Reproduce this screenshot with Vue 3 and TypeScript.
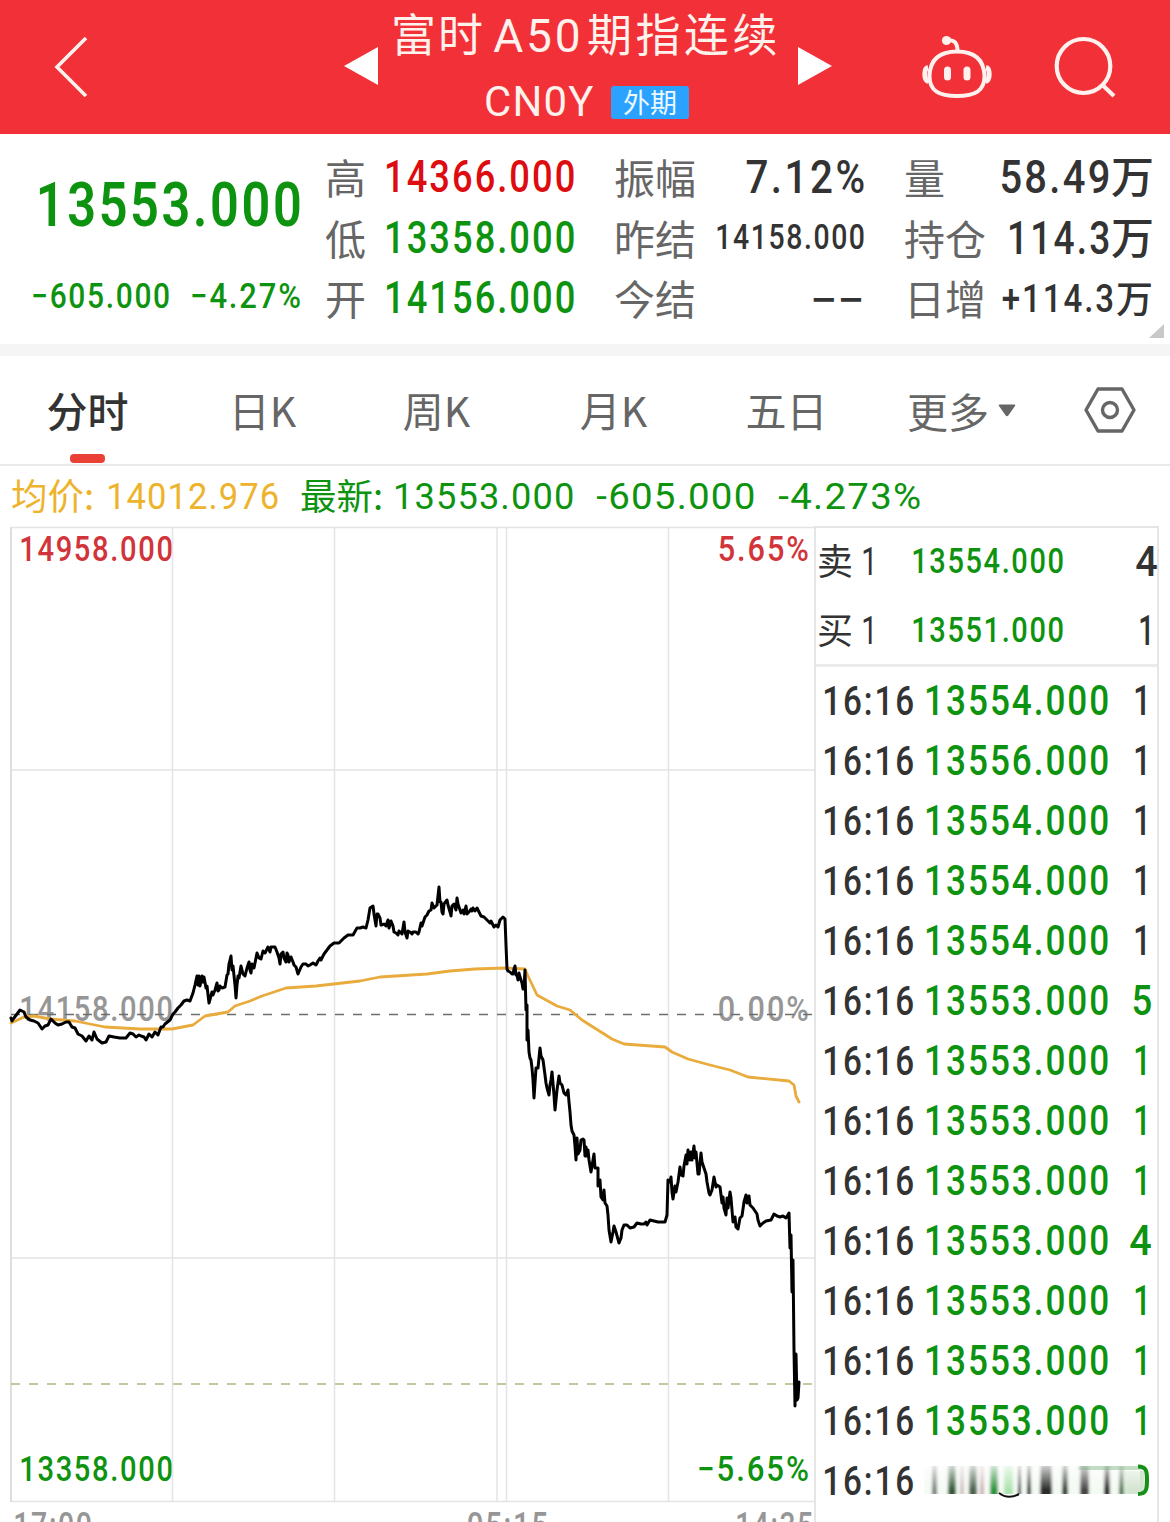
<script setup lang="ts">
import { h, type FunctionalComponent } from 'vue'

// Advance width and side bearings (in em) of the numeric glyphs
const ADV: Record<string, number> = { '.': 0.275, ':': 0.26, '%': 0.735, '+': 0.56, '-': 0.3, '−': 0.56, C: 0.651, N: 0.713, Y: 0.6, A: 0.652 }
const LEFT: Record<string, number> = { '1': 0.025, '4': 0.02, '+': 0.035, '-': 0.018, '−': 0.06, A: 0.014, C: 0.045, '%': 0.05 }
const RIGHT: Record<string, number> = { '1': 0.12, '4': 0.018, '%': 0.03, Y: 0.008, '−': 0.05 }

interface NumProps { t: string; w: number; h: number; f?: number }
// Numeric text w pixels from first to last stroke, digits h pixels tall;
// f is the share of the width taken by the glyphs, the rest goes to letter spacing
const Num: FunctionalComponent<NumProps> = (p) => {
  const size = p.h / 0.711
  const chars = [...p.t]
  const adv = chars.reduce((s, c) => s + (ADV[c] ?? 0.566), 0)
  const l = LEFT[chars[0]] ?? 0.04
  const r = RIGHT[chars[chars.length - 1]] ?? 0.035
  const ink = (adv - l - r) * size
  const k = (p.w / ink) * (chars.length > 1 ? (p.f ?? 0.91) : 1)
  return h('svg', { class: 'num', width: p.w, height: p.h }, [
    h('text', {
      x: -l * size, y: p.h, 'font-size': size, transform: `scale(${k} 1)`,
      textLength: adv * size + p.w / k - ink, lengthAdjust: chars.length > 1 ? 'spacing' : 'spacingAndGlyphs',
    }, p.t),
  ])
}
Num.props = ['t', 'w', 'h', 'f']

const ticks = [
  ['13554.000', '1'], ['13556.000', '1'], ['13554.000', '1'], ['13554.000', '1'], ['13554.000', '1'],
  ['13553.000', '5'], ['13553.000', '1'], ['13553.000', '1'], ['13553.000', '1'], ['13553.000', '4'],
  ['13553.000', '1'], ['13553.000', '1'], ['13553.000', '1'],
].map(([price, qty], i) => ({ price, qty, up: i < 5 }))

const price = '11,1018 12,1021 14,1018 17,1014 20,1010 24,1012 26,1017 30,1020 34,1021 38,1023 42,1029 45,1026 48,1025 51,1019 55,1023 58,1025 62,1024 66,1022 69,1022 72,1027 75,1028 78,1034 82,1036 86,1041 89,1036 92,1040 94,1032 97,1039 102,1043 106,1042 109,1036 114,1037 120,1038 126,1038 130,1033 133,1034 136,1037 139,1035 141,1036 144,1037 146,1040 149,1034 152,1037 155,1032 158,1035 161,1027 163,1027 165,1024 170,1020 173,1014 175,1012 178,1008 181,1005 184,1001 187,1000 190,1001 193,993 195,985 197,976 198,985 199,976 200,986 202,976 203,982 204,977 206,988 207,986 209,1003 212,992 213,995 215,990 217,983 218,991 219,990 220,986 222,988 225,987 227,975 228,974 229,964 231,956 232,970 233,966 235,985 236,998 237,985 238,976 239,978 240,972 241,966 243,974 245,976 247,968 249,962 250,970 251,973 252,964 254,968 257,953 259,958 261,959 263,951 265,953 268,947 270,952 271,947 275,947 277,952 279,958 280,964 281,954 283,952 284,958 286,962 287,953 288,955 289,962 291,957 293,962 294,965 296,967 298,974 301,967 303,964 306,964 308,966 310,965 313,963 316,965 318,961 320,958 321,960 324,954 330,946 334,943 339,943 344,938 348,935 353,935 357,928 360,928 363,927 366,928 368,920 370,908 373,906 374,914 376,926 377,914 378,914 380,918 381,925 382,925 384,924 386,926 388,920 389,928 391,921 393,926 394,932 396,933 398,935 399,931 402,934 404,922 405,932 407,938 408,931 410,932 412,934 413,932 416,932 418,934 419,932 421,923 422,926 425,917 427,915 429,911 431,910 432,903 434,908 437,905 439,887 440,902 441,902 442,912 443,914 444,904 447,900 448,905 450,912 451,916 452,906 454,904 456,910 457,898 458,904 461,913 463,910 464,914 466,906 467,914 469,912 471,909 472,911 473,908 475,911 477,908 479,912 481,916 484,917 486,919 488,921 490,923 491,921 494,927 496,925 498,927 500,920 503,917 505,919 506,945 507,969 508,971 510,972 512,974 513,974 514,969 515,966 516,975 517,975 518,980 519,973 520,977 522,983 523,989 524,989 525,970 526,1010 527,1005 527,1040 528,1030 529,1052 530,1058 531,1060 532,1068 533,1080 534,1098 536,1068 538,1068 539,1058 540,1048 541,1056 543,1060 545,1075 546,1083 547,1088 549,1095 550,1085 551,1080 552,1072 554,1095 555,1110 557,1090 559,1076 560,1083 562,1085 564,1093 566,1095 568,1090 569,1102 570,1112 571,1125 572,1131 574,1135 575,1146 576,1160 577,1138 578,1154 580,1150 581,1140 583,1139 584,1140 585,1156 586,1147 587,1156 588,1150 589,1160 591,1172 593,1160 594,1154 595,1168 598,1168 598,1186 600,1180 601,1197 603,1200 604,1190 605,1203 607,1206 608,1215 609,1230 611,1242 613,1232 614,1226 616,1232 619,1243 621,1238 622,1230 624,1225 627,1225 630,1228 634,1227 637,1223 641,1224 644,1224 646,1222 647,1225 650,1220 654,1221 658,1222 665,1222 667,1215 668,1180 670,1182 671,1177 672,1192 673,1199 675,1186 676,1192 678,1182 680,1167 681,1175 683,1176 684,1166 686,1155 687,1164 688,1150 690,1160 691,1152 692,1160 694,1146 695,1158 696,1152 698,1174 699,1174 701,1153 702,1162 704,1168 706,1174 707,1182 709,1193 710,1195 712,1190 714,1177 716,1187 717,1185 720,1187 722,1203 723,1197 724,1208 726,1215 727,1198 728,1208 730,1192 731,1198 733,1222 735,1217 736,1227 738,1229 740,1218 742,1216 744,1202 746,1195 747,1203 749,1196 750,1205 753,1208 755,1211 757,1214 758,1220 760,1226 763,1223 766,1221 771,1220 774,1214 777,1216 780,1217 783,1216 786,1218 789,1213 790,1248 791,1235 792,1292 793,1260 794,1350 795,1406 796,1354 797,1400 798,1398 799,1382'
const average = '11,1023 24,1017 34,1016 50,1019 75,1021 105,1027 140,1029 172,1029 193,1025 205,1016 228,1012 235,1006 250,1001 262,996 286,988 316,986 360,981 380,977 427,974 450,971 475,969 505,968 525,969 528,976 537,995 557,1006 570,1010 582,1020 612,1039 624,1044 665,1047 672,1052 688,1059 710,1065 730,1070 748,1077 789,1081 794,1085 796,1096 799,1102'

// Streaks over the newest trade: x, width, colour, strength
const streaks: [number, number, string, number][] = [
  [8, 5, '#555', 0.75], [24, 8, '#1d4a25', 0.9], [36, 4, '#b99aa0', 0.6], [45, 8, '#2f4a33', 0.85], [56, 4, '#b5808a', 0.6],
  [66, 8, '#168a2b', 0.9], [80, 9, '#8fdc90', 0.7], [94, 3, '#222', 0.95], [103, 4, '#222', 0.95], [116, 12, '#222', 0.95],
  [138, 6, '#263328', 0.9], [156, 9, '#333', 0.9], [180, 6, '#222', 0.95], [195, 5, '#2f5a35', 0.8],
]
</script>

<template>
  <main class="screen">
    <header class="top">
      <svg class="back" width="36" height="62"><path d="M33 3 4 32 33 61" fill="none" stroke="#fff1ec" stroke-width="3.600" /></svg>
      <svg class="prev" width="34" height="38"><path d="M0 19 34 0V38z" fill="#fff" /></svg>
      <div class="title">
        <div class="name">
          <span class="cjk n1">富时</span><Num t="A50" :w="85" :h="33" :f="0.94" /><span class="cjk n2">期指连续</span>
        </div>
        <div class="code"><Num t="CN0Y" :w="107" :h="30" :f="0.97" /><span class="badge cjk">外期</span></div>
      </div>
      <svg class="next" width="34" height="38"><path d="M34 19 0 0V38z" fill="#fff" /></svg>
      <svg class="robot" width="72" height="66" fill="none" stroke="#fff1ee" stroke-width="4">
        <path d="M36 17.500C54 17.500 63 26 63.500 42C63.500 57 54 62 36 62S8.500 57 8.500 42C9 26 18 17.500 36 17.500z" />
        <path d="M7 33.500C4.500 34 3.800 36 3.800 40S4.500 46.500 7.500 47.500M65 33.500C67.500 34 68.200 36 68.200 40S67.500 46.500 64.500 47.500" stroke-width="5" />
        <path d="M26 6.500C33 5 36.500 9 36.500 17" />
        <circle cx="25.500" cy="6.500" r="4.600" fill="#fff1ee" stroke="none" />
        <path d="M26.500 36v7M46 36v7" stroke-width="7" stroke-linecap="round" />
      </svg>
      <svg class="search" width="62" height="62" fill="none" stroke="#fff1ee" stroke-width="4.200"><ellipse cx="29.500" cy="30" rx="26.800" ry="27" /><path d="M49 49.500 60 60" /></svg>
    </header>

    <section class="quote">
      <div class="last green">
        <Num class="bold" t="13553.000" :w="263" :h="44" />
        <div class="change"><Num t="−605.000" :w="136" :h="25" /><Num t="−4.27%" :w="108" :h="25" /></div>
      </div>
      <div class="stats c1">
        <div><span class="cjk">高</span><Num class="red" t="14366.000" :w="189" :h="32" /></div>
        <div><span class="cjk">低</span><Num class="green" t="13358.000" :w="189" :h="32" /></div>
        <div><span class="cjk">开</span><Num class="green" t="14156.000" :w="189" :h="32" /></div>
      </div>
      <div class="stats c2">
        <div><span class="cjk">振幅</span><Num t="7.12%" :w="117" :h="33" /></div>
        <div><span class="cjk">昨结</span><Num t="14158.000" :w="148" :h="25" /></div>
        <div><span class="cjk">今结</span><Num class="dash" t="−−" :w="49" :h="29" :f="1" /></div>
      </div>
      <div class="stats c3">
        <div><span class="cjk">量</span><b><Num t="58.49" :w="108" :h="33" /><i class="cjk">万</i></b></div>
        <div><span class="cjk">持仓</span><b><Num t="114.3" :w="101" :h="33" /><i class="cjk">万</i></b></div>
        <div><span class="cjk">日增</span><b><Num t="+114.3" :w="110" :h="28" /><i class="cjk small">万</i></b></div>
      </div>
      <svg class="corner" width="15" height="14"><path d="M15 0V14H0z" fill="#c8c8c8" /></svg>
    </section>

    <nav class="tabs cjk">
      <span class="tab active">分时</span>
      <span class="tab">日K</span>
      <span class="tab">周K</span>
      <span class="tab">月K</span>
      <span class="tab">五日</span>
      <span class="tab more">更多<svg width="18" height="13"><path d="M1.500 .5H16.500Q18 .5 17 2L10.300 11.500Q9 13 7.700 11.500L1 2Q0 .5 1.500 .5z" fill="#666" /></svg></span>
      <svg class="gear" width="52" height="46" fill="none" stroke="#666" stroke-width="3.400"><path d="M14 2H38L50 23 38 44H14L2 23z" stroke-linejoin="round" /><circle cx="26" cy="23" r="7.500" /></svg>
    </nav>

    <div class="info">
      <span class="cjk gold">均价:</span><Num class="gold" t="14012.976" :w="171" :h="26" :f="0.96" />
      <span class="cjk green newest">最新:</span><Num class="green" t="13553.000" :w="179" :h="26" :f="0.96" />
      <Num class="green d1" t="-605.000" :w="157" :h="26" :f="0.96" /><Num class="green d2" t="-4.273%" :w="141" :h="26" :f="0.96" />
    </div>

    <section class="board">
      <div class="chart">
        <div class="labels">
          <div class="red2"><Num t="14958.000" :w="152" :h="25" /><Num t="5.65%" :w="89" :h="25" /></div>
          <div class="grey"><Num t="14158.000" :w="152" :h="25" /><Num t="0.00%" :w="89" :h="25" /></div>
          <div class="green"><Num t="13358.000" :w="152" :h="25" /><Num t="−5.65%" :w="109" :h="25" /></div>
        </div>
        <svg class="plot" width="816" height="996" viewBox="0 526 816 996" fill="none">
          <path d="M11 527.500H815M11 770H815M11 1258H815M11 1501.500H815M172.500 527V1501M334.500 527V1501M497 527V1501M506.500 527V1501M668.500 527V1501" stroke="#e4e4e4" stroke-width="1.500" />
          <path d="M11 527V1502" stroke="#dedede" stroke-width="2" />
          <path d="M11 1014.500H812" stroke="#6e6e6e" stroke-width="1.300" stroke-dasharray="9 9" />
          <path d="M11 1384H812" stroke="#a9bb7c" stroke-width="1.400" stroke-dasharray="9 9" />
          <polyline :points="average" stroke="#e8ab3c" stroke-width="2.800" stroke-linejoin="round" stroke-linecap="round" />
          <polyline :points="price" stroke="#000" stroke-width="3" stroke-linejoin="round" stroke-linecap="round" />
        </svg>
        <div class="axis grey"><Num t="17:00" :w="77" :h="26" /><Num t="05:15" :w="79" :h="26" /><Num t="14:35" :w="76" :h="26" /></div>
      </div>

      <aside class="side">
        <div class="book">
          <div><span class="cjk">卖</span><Num class="lvl" t="1" :w="12" :h="28" /><Num class="green mid" t="13554.000" :w="151" :h="25" /><Num class="qty wide" t="4" :w="21" :h="30" /></div>
          <div><span class="cjk">买</span><Num class="lvl" t="1" :w="12" :h="28" /><Num class="green mid" t="13551.000" :w="151" :h="25" /><Num class="qty" t="1" :w="12" :h="30" /></div>
        </div>
        <div class="trades">
          <div v-for="(k, i) in ticks" :key="i" class="trade">
            <Num t="16:16" :w="90" :h="29" />
            <Num class="green px" :t="k.price" :w="183" :h="30" />
            <Num class="qty" :class="{ green: !k.up, five: k.qty !== '1' }" :t="k.qty" :w="k.qty === '1' ? 13 : k.qty === '4' ? 21 : 18" :h="30" />
          </div>
          <div class="trade">
            <Num t="16:16" :w="90" :h="29" />
            <svg class="smear" width="230" height="40">
              <defs>
                <linearGradient id="fade" x1="0" y1="0" x2="0" y2="1"><stop offset="0" stop-color="#fff" stop-opacity=".9" /><stop offset="1" stop-color="#fff" stop-opacity="0" /></linearGradient>
                <filter id="soft" x="-5%" y="-5%" width="110%" height="110%"><feGaussianBlur stdDeviation="1.800 .4" /></filter>
              </defs>
              <g filter="url(#soft)">
                <rect x="0" y="4" width="222" height="28" fill="#edf7ed" opacity=".6" />
                <rect x="201" y="9" width="20" height="23" fill="#d3e5d0" />
                <rect v-for="s in streaks" :key="s[0]" :x="s[0]" y="4" :width="s[1]" height="28" :fill="s[2]" :opacity="s[3]" />
              </g>
              <rect x="0" y="0" width="216" height="28" fill="url(#fade)" />
              <rect x="155" y="4" width="62" height="4" fill="#6fae74" opacity=".4" filter="url(#soft)" />
              <path d="M75 31Q84 38 95 32" fill="none" stroke="#111" stroke-width="2" />
              <path d="M214 4.500C223 4.500 223 10 223 18S223 32 214 32" fill="none" stroke="#148f18" stroke-width="4" />
            </svg>
          </div>
        </div>
      </aside>
    </section>
  </main>
</template>

<style>
html, body { margin: 0; background: #fff; overflow: hidden; }
</style>

<style scoped>
.screen { width: 1170px; height: 1522px; overflow: hidden; background: #fff; color: #333; font-family: Roboto, "Noto Sans CJK SC", sans-serif; }
.screen :deep(.num) { display: block; flex: none; overflow: visible; fill: currentColor; font-family: Roboto, sans-serif; font-weight: 500; }
.screen :deep(.bold) { font-weight: 600; }
svg { display: block; flex: none; }
.cjk { font-family: "Noto Sans CJK SC", sans-serif; white-space: nowrap; }
.green { color: #0d930f; }
.red { color: #dc0c10; }
.red2 { color: #d1343a; }
.grey { color: #969696; }
.gold { color: #edb32c; }

.top { display: flex; height: 134px; background: #f13037; color: #fff1ec; }
.top :deep(.num) { font-weight: 400; }
.back { margin: 35px 0 0 53px; }
.prev { margin: 47px 0 0 255px; }
.title { width: 400px; margin-left: 12px; }
.name { display: flex; height: 76px; }
.name :deep(.num) { margin-top: 19px; }
.n1, .n2 { font-size: 45px; line-height: 60px; margin-top: 3px; font-weight: 400; letter-spacing: 2px; }
.n1 { width: 103px; margin-left: 1px; }
.n2 { margin-left: 8px; letter-spacing: 3.500px; }
.code { display: flex; margin: 10px 0 0 96px; }
.badge { width: 78px; height: 33px; margin-left: 18px; border-radius: 3px; background: #2ba2ff; color: #ecfaff; font-size: 27px; line-height: 31px; text-align: center; font-weight: 400; }
.next { margin: 47px 0 0 8px; }
.robot { margin: 34px 0 0 89px; }
.search { margin: 36px 0 0 61px; }

.quote { position: relative; display: flex; height: 210px; border-bottom: 12px solid #f5f5f5; }
.last { width: 325px; }
.last > :deep(.num) { margin: 48px 0 0 37px; }
.change { display: flex; gap: 23px; margin: 57px 0 0 33px; }
.stats { display: flex; flex-direction: column; padding-top: 14px; }
.stats > div { display: flex; align-items: center; justify-content: space-between; height: 60.500px; }
.stats span { margin-top: -4px; font-size: 41px; line-height: 56px; color: #666; font-weight: 400; }
.c1 { width: 249px; }
.c2 { width: 250px; margin-left: 40px; }
.c3 { width: 249px; margin-left: 40px; }
.c1 :deep(.num), .c2 :deep(.num) { margin-top: -4px; }
.c2 :deep(.dash) { margin: 0 2px 0 0; }
.c3 b { display: flex; align-items: center; }
.c3 :deep(.num) { margin-top: -3px; }
.c3 i { margin: -8px -1px 0 2px; font-size: 43px; line-height: 56px; font-style: normal; font-weight: 500; }
.c3 i.small { margin: -4px 0 0 3px; font-size: 37px; }
.corner { position: absolute; right: 6px; bottom: 6px; }

.tabs { display: flex; height: 108px; border-bottom: 2px solid #e9e9e9; font-size: 41px; line-height: 106px; color: #666; font-weight: 400; }
.tab { width: 175px; text-align: center; }
.tab.active { position: relative; font-weight: 500; color: #333; }
.tab.active::after { content: ""; position: absolute; left: 70px; bottom: 1px; width: 35px; height: 9px; border-radius: 4px; background: #ea4036; }
.tab:nth-child(2) { width: 175px; }
.tab:nth-child(3) { width: 173px; }
.tab:nth-child(4) { width: 181px; }
.tab:nth-child(5) { width: 165px; }
.tab.more { display: flex; align-items: center; width: 110px; margin-left: 38px; }
.tab.more svg { margin-left: 9px; }
.gear { margin: 31px 0 0 67px; }

.info { display: flex; height: 60px; padding-left: 11px; }
.info :deep(.num) { margin-top: 17px; font-weight: 400; }
.info span { width: 96px; font-size: 36.500px; line-height: 57px; font-weight: 400; }
.info .newest { width: 94px; margin-left: 22px; }
.info :deep(.d1) { margin-left: 24px; }
.info :deep(.d2) { margin-left: 25px; }

.board { display: flex; height: 996px; }
.chart { position: relative; width: 814px; }
.plot { position: absolute; left: 0; top: 0; }
.labels { display: flex; flex-direction: column; justify-content: space-between; height: 945px; padding: 10px 6px 0 20px; }
.labels > div { display: flex; justify-content: space-between; }
.axis { display: flex; justify-content: space-between; padding: 31px 2px 0 14px; }
.axis :deep(.num:nth-child(2)) { margin-left: 187px; }

.side { width: 341px; border: 2px solid #e5e5e5; border-bottom: 0; }
.book { display: flow-root; height: 136px; border-bottom: 3px solid #ebebeb; }
.book > div { display: flex; align-items: center; height: 69px; margin-top: -2px; padding-left: 1px; }
.book > div + div { margin-top: 0; }
.book span { margin-top: -4px; font-size: 36px; line-height: 56px; width: 36px; font-weight: 400; }
.book :deep(.lvl) { margin-left: 9px; font-weight: 400; }
.book :deep(.mid) { margin-left: 38px; }
.book :deep(.qty) { margin: 0 6px 0 auto; }
.book :deep(.wide) { margin-right: 0; }
.trades { padding-top: 3px; }
.trade { display: flex; align-items: center; height: 60px; padding-left: 7px; }
.trade :deep(.px) { margin-left: 12px; }
.trade :deep(.qty) { margin: 0 10px 0 auto; }
.trade :deep(.five) { margin-right: 6px; }
.smear { margin: 4px 0 0 11px; }
</style>
